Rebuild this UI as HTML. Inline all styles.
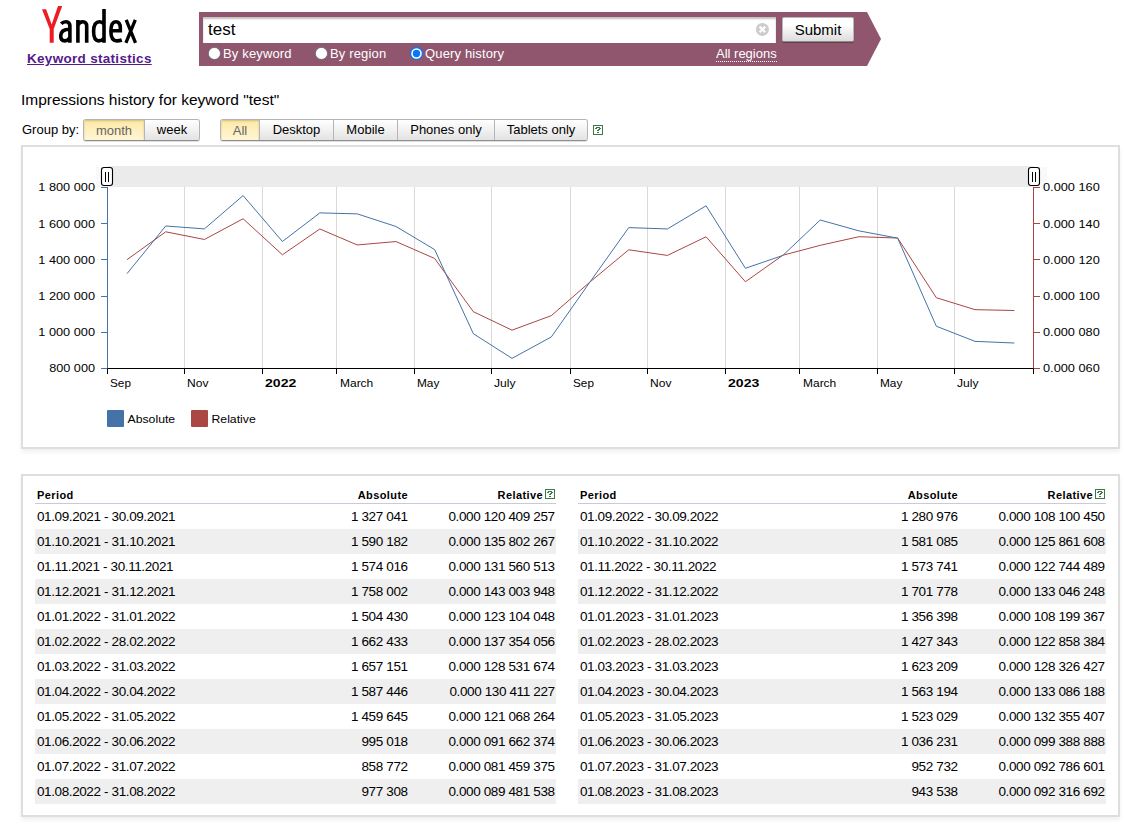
<!DOCTYPE html>
<html><head><meta charset="utf-8"><title>Keyword statistics</title>
<style>
*{margin:0;padding:0;box-sizing:border-box}
html,body{width:1142px;height:827px;overflow:hidden;background:#fff}
body{font-family:"Liberation Sans",sans-serif;font-size:13px;color:#000;position:relative}
.abs{position:absolute}
.ax{font-family:"Liberation Sans",sans-serif;font-size:11px;fill:#000}
.ax.b{font-weight:bold}
#kw{left:27px;top:51px;font-weight:bold;font-size:13.5px;letter-spacing:.3px;color:#551a8b;text-decoration:underline;white-space:nowrap}
#form{left:199px;top:12px;width:683px;height:54px}
#inp{left:203px;top:17px;width:573px;height:26px;background:#fff;box-shadow:inset 0 2px 2px rgba(0,0,0,.25)}
#inp span{position:absolute;left:5px;top:3px;font-size:17px}
#clr{left:756px;top:23px;width:13px;height:13px;border-radius:50%;background:#cfcfcf}
#sub{left:782px;top:17px;width:72px;height:25px;border:1px solid #b9b9b9;border-bottom-color:#8a8a8a;border-radius:2px;background:linear-gradient(#fff 30%,#dcdcdc);box-shadow:0 1px 1px rgba(0,0,0,.3);font-size:15px;text-align:center;line-height:23px}
.rad{position:absolute;top:47px;width:12px;height:12px;border-radius:50%;background:#fff;box-shadow:0 0 1px #777}
.rad.on{background:#1a73e8;border:2px solid #fff}
.rl{position:absolute;top:46px;color:#fff;font-size:13px;white-space:nowrap;letter-spacing:.15px}
#allr{position:absolute;top:46px;left:716px;color:#fff;font-size:13px;white-space:nowrap;border-bottom:1px dotted #fff;line-height:15px}
#title{left:21px;top:91px;font-size:15.5px;white-space:nowrap}
#gb{left:22px;top:122px;font-size:13px;white-space:nowrap}
.bg{position:absolute;top:119px;height:22px;display:flex;border:1px solid #b4b4b4;border-bottom-color:#8e8e8e;border-radius:3px;overflow:hidden;box-shadow:0 1px 0 rgba(0,0,0,.12)}
.bg div{height:20px;line-height:20px;font-size:13px;text-align:center;background:linear-gradient(#fff,#e3e3e3);border-left:1px solid #b5b5b5;white-space:nowrap}
.bg div:first-child{border-left:none}
.bg div.on{background:linear-gradient(#fde9a6,#fff6d6);color:#666;line-height:22px;box-shadow:inset 0 1px 2px rgba(110,90,20,.3)}
.help{display:inline-block;width:10px;height:10px;vertical-align:top}
th .help{margin-left:2px;position:relative;top:0px}
#panel1{left:21px;top:145px;width:1099px;height:304px;border:2px solid #dedede;box-shadow:0 3px 4px rgba(0,0,0,.06)}
#panel2{left:21px;top:474px;width:1099px;height:343px;border:2px solid #dedede;box-shadow:0 3px 4px rgba(0,0,0,.06)}
table{position:absolute;border-collapse:collapse;top:486px;table-layout:fixed}
th{font-size:11px;font-weight:bold;letter-spacing:.4px;height:17px;border-bottom:1px solid #cdc8d9;padding:3px 1px 0 2px;vertical-align:top;text-align:right;line-height:13px}
th.p{text-align:left}
td{height:25px;padding:0 2px;font-size:13.5px;letter-spacing:-.4px;word-spacing:.1px;white-space:nowrap}
td.n{text-align:right;padding-right:1.4px}
th:last-child{padding-right:1px}
tr.first td{height:26px}
tr.odd td{background:#efefef}
</style></head><body>
<div class="abs" id="panel1"></div>
<div class="abs" id="panel2"></div>
<div class="abs" id="kw">Keyword statistics</div>
<svg class="abs" style="left:0;top:0" width="1142" height="70"><polygon points="199,12 867,12 881,39 867,66 199,66" fill="#8f566e"/></svg>
<div class="abs" id="inp"><span>test</span></div>
<svg class="abs" style="left:755px;top:22px" width="15" height="15"><circle cx="7.4" cy="7.4" r="6.5" fill="#cccccc"/><path d="M4.6 4.6 L10.2 10.2 M10.2 4.6 L4.6 10.2" stroke="#fff" stroke-width="2.2"/></svg>
<div class="abs" id="sub">Submit</div>
<svg class="abs" style="left:0;top:0" width="440" height="70"><circle cx="214.4" cy="53.45" r="6.1" fill="#fff" stroke="#666" stroke-width="0.9"/><circle cx="321.45" cy="53.45" r="6.1" fill="#fff" stroke="#666" stroke-width="0.9"/><circle cx="416.5" cy="53.45" r="6.6" fill="#0a75f5"/><circle cx="416.5" cy="53.45" r="5.3" fill="#fff"/><circle cx="416.5" cy="53.45" r="3.7" fill="#0a75f5"/></svg><div class="rl" style="left:223px">By keyword</div>
<div class="rl" style="left:330px">By region</div>
<div class="rl" style="left:425px">Query history</div>
<div id="allr">All regions</div>
<div class="abs" id="title">Impressions history for keyword "test"</div>
<div class="abs" id="gb">Group by:</div>
<div class="bg" style="left:83px;width:117px"><div class="on" style="width:60px">month</div><div style="width:55px">week</div></div>
<div class="bg" style="left:220px;width:368px"><div class="on" style="width:38px">All</div><div style="width:74px">Desktop</div><div style="width:64px">Mobile</div><div style="width:97px">Phones only</div><div style="width:93px">Tablets only</div></div>
<div class="abs" style="left:593px;top:125px"><svg class="help" width="10" height="10" shape-rendering="crispEdges"><rect x="0.5" y="0.5" width="9" height="9" fill="none" stroke="#3b7a47"/><path d="M3 2h4v1H3z M2 3h2v1H2z M6 3h2v1H6z M5 4h2v1H5z M4 5h2v1H4z M4 7h2v1H4z" fill="#3b7a47"/></svg></div>
<svg width="1142" height="827" viewBox="0 0 1142 827" style="position:absolute;left:0;top:0">
<rect x="96" y="167" width="951" height="20" fill="#f9f9f9"/>
<rect x="107" y="166" width="927" height="21" fill="#ebebeb"/>
<line x1="184.5" y1="187" x2="184.5" y2="368" stroke="#d9d9d9" stroke-width="1"/>
<line x1="262.5" y1="187" x2="262.5" y2="368" stroke="#d9d9d9" stroke-width="1"/>
<line x1="336.5" y1="187" x2="336.5" y2="368" stroke="#d9d9d9" stroke-width="1"/>
<line x1="414.5" y1="187" x2="414.5" y2="368" stroke="#d9d9d9" stroke-width="1"/>
<line x1="491.5" y1="187" x2="491.5" y2="368" stroke="#d9d9d9" stroke-width="1"/>
<line x1="570.5" y1="187" x2="570.5" y2="368" stroke="#d9d9d9" stroke-width="1"/>
<line x1="647.5" y1="187" x2="647.5" y2="368" stroke="#d9d9d9" stroke-width="1"/>
<line x1="725.5" y1="187" x2="725.5" y2="368" stroke="#d9d9d9" stroke-width="1"/>
<line x1="799.5" y1="187" x2="799.5" y2="368" stroke="#d9d9d9" stroke-width="1"/>
<line x1="877.5" y1="187" x2="877.5" y2="368" stroke="#d9d9d9" stroke-width="1"/>
<line x1="954.5" y1="187" x2="954.5" y2="368" stroke="#d9d9d9" stroke-width="1"/>
<line x1="107" y1="368.5" x2="1034" y2="368.5" stroke="#000" stroke-width="1"/>
<line x1="107.5" y1="368" x2="107.5" y2="374" stroke="#000" stroke-width="1"/>
<line x1="184.5" y1="368" x2="184.5" y2="374" stroke="#000" stroke-width="1"/>
<line x1="262.5" y1="368" x2="262.5" y2="374" stroke="#000" stroke-width="1"/>
<line x1="336.5" y1="368" x2="336.5" y2="374" stroke="#000" stroke-width="1"/>
<line x1="414.5" y1="368" x2="414.5" y2="374" stroke="#000" stroke-width="1"/>
<line x1="491.5" y1="368" x2="491.5" y2="374" stroke="#000" stroke-width="1"/>
<line x1="570.5" y1="368" x2="570.5" y2="374" stroke="#000" stroke-width="1"/>
<line x1="647.5" y1="368" x2="647.5" y2="374" stroke="#000" stroke-width="1"/>
<line x1="725.5" y1="368" x2="725.5" y2="374" stroke="#000" stroke-width="1"/>
<line x1="799.5" y1="368" x2="799.5" y2="374" stroke="#000" stroke-width="1"/>
<line x1="877.5" y1="368" x2="877.5" y2="374" stroke="#000" stroke-width="1"/>
<line x1="954.5" y1="368" x2="954.5" y2="374" stroke="#000" stroke-width="1"/>
<line x1="1033.5" y1="368" x2="1033.5" y2="374" stroke="#000" stroke-width="1"/>
<line x1="107.5" y1="187" x2="107.5" y2="368.5" stroke="#4572a7" stroke-width="1"/>
<line x1="1033.5" y1="187" x2="1033.5" y2="368.5" stroke="#aa4643" stroke-width="1"/>
<line x1="101" y1="187.5" x2="107" y2="187.5" stroke="#4572a7" stroke-width="1"/>
<line x1="1034" y1="187.5" x2="1040" y2="187.5" stroke="#aa4643" stroke-width="1"/>
<text x="95.0" y="191.3" text-anchor="end" class="ax" textLength="56.69" lengthAdjust="spacingAndGlyphs">1 800 000</text>
<text x="1043.0" y="191.3" text-anchor="start" class="ax" textLength="56.82" lengthAdjust="spacingAndGlyphs">0.000 160</text>
<line x1="101" y1="223.5" x2="107" y2="223.5" stroke="#4572a7" stroke-width="1"/>
<line x1="1034" y1="223.5" x2="1040" y2="223.5" stroke="#aa4643" stroke-width="1"/>
<text x="95.0" y="227.5" text-anchor="end" class="ax" textLength="56.69" lengthAdjust="spacingAndGlyphs">1 600 000</text>
<text x="1043.0" y="227.5" text-anchor="start" class="ax" textLength="56.82" lengthAdjust="spacingAndGlyphs">0.000 140</text>
<line x1="101" y1="259.5" x2="107" y2="259.5" stroke="#4572a7" stroke-width="1"/>
<line x1="1034" y1="259.5" x2="1040" y2="259.5" stroke="#aa4643" stroke-width="1"/>
<text x="95.0" y="263.7" text-anchor="end" class="ax" textLength="56.69" lengthAdjust="spacingAndGlyphs">1 400 000</text>
<text x="1043.0" y="263.7" text-anchor="start" class="ax" textLength="56.82" lengthAdjust="spacingAndGlyphs">0.000 120</text>
<line x1="101" y1="296.5" x2="107" y2="296.5" stroke="#4572a7" stroke-width="1"/>
<line x1="1034" y1="296.5" x2="1040" y2="296.5" stroke="#aa4643" stroke-width="1"/>
<text x="95.0" y="299.9" text-anchor="end" class="ax" textLength="56.69" lengthAdjust="spacingAndGlyphs">1 200 000</text>
<text x="1043.0" y="299.9" text-anchor="start" class="ax" textLength="56.82" lengthAdjust="spacingAndGlyphs">0.000 100</text>
<line x1="101" y1="332.5" x2="107" y2="332.5" stroke="#4572a7" stroke-width="1"/>
<line x1="1034" y1="332.5" x2="1040" y2="332.5" stroke="#aa4643" stroke-width="1"/>
<text x="95.0" y="336.1" text-anchor="end" class="ax" textLength="56.69" lengthAdjust="spacingAndGlyphs">1 000 000</text>
<text x="1043.0" y="336.1" text-anchor="start" class="ax" textLength="56.82" lengthAdjust="spacingAndGlyphs">0.000 080</text>
<line x1="101" y1="368.5" x2="107" y2="368.5" stroke="#4572a7" stroke-width="1"/>
<line x1="1034" y1="368.5" x2="1040" y2="368.5" stroke="#aa4643" stroke-width="1"/>
<text x="95.0" y="372.3" text-anchor="end" class="ax" textLength="45.83" lengthAdjust="spacingAndGlyphs">800 000</text>
<text x="1043.0" y="372.3" text-anchor="start" class="ax" textLength="56.82" lengthAdjust="spacingAndGlyphs">0.000 060</text>
<text x="110.0" y="387.0" text-anchor="start" class="ax" textLength="20.92" lengthAdjust="spacingAndGlyphs">Sep</text>
<text x="187.0" y="387.0" text-anchor="start" class="ax" textLength="21.41" lengthAdjust="spacingAndGlyphs">Nov</text>
<text x="265.0" y="387.0" text-anchor="start" class="ax b" textLength="31.28" lengthAdjust="spacingAndGlyphs">2022</text>
<text x="340.0" y="387.0" text-anchor="start" class="ax" textLength="33.26" lengthAdjust="spacingAndGlyphs">March</text>
<text x="417.0" y="387.0" text-anchor="start" class="ax" textLength="22.39" lengthAdjust="spacingAndGlyphs">May</text>
<text x="494.0" y="387.0" text-anchor="start" class="ax" textLength="21.48" lengthAdjust="spacingAndGlyphs">July</text>
<text x="573.0" y="387.0" text-anchor="start" class="ax" textLength="20.92" lengthAdjust="spacingAndGlyphs">Sep</text>
<text x="650.0" y="387.0" text-anchor="start" class="ax" textLength="21.41" lengthAdjust="spacingAndGlyphs">Nov</text>
<text x="728.0" y="387.0" text-anchor="start" class="ax b" textLength="31.28" lengthAdjust="spacingAndGlyphs">2023</text>
<text x="803.0" y="387.0" text-anchor="start" class="ax" textLength="33.26" lengthAdjust="spacingAndGlyphs">March</text>
<text x="880.0" y="387.0" text-anchor="start" class="ax" textLength="22.39" lengthAdjust="spacingAndGlyphs">May</text>
<text x="957.0" y="387.0" text-anchor="start" class="ax" textLength="21.48" lengthAdjust="spacingAndGlyphs">July</text>
<path d="M127.03 259.66 L165.72 231.80 L204.41 239.48 L243.09 218.76 L282.42 254.78 L319.84 228.99 L357.26 244.96 L395.95 241.56 L434.64 258.47 L473.33 311.69 L512.02 330.16 L551.34 315.64 L590.03 281.94 L628.72 249.79 L667.41 255.43 L706.09 236.79 L745.42 281.76 L782.84 255.23 L820.26 245.33 L858.95 236.71 L897.64 238.04 L936.33 297.71 L975.02 309.66 L1014.34 310.51" fill="none" stroke="#aa4643" stroke-width="1" stroke-linejoin="round"/>
<path d="M127.03 273.61 L165.72 225.98 L204.41 228.90 L243.09 195.60 L282.42 241.50 L319.84 212.90 L357.26 213.86 L395.95 226.47 L434.64 249.60 L473.33 333.70 L512.02 358.36 L551.34 336.91 L590.03 281.94 L628.72 227.62 L667.41 228.95 L706.09 205.78 L745.42 268.29 L782.84 255.45 L820.26 220.00 L858.95 230.86 L897.64 238.13 L936.33 326.24 L975.02 341.36 L1014.34 343.02" fill="none" stroke="#4572a7" stroke-width="1" stroke-linejoin="round"/>
<rect x="101.5" y="167.5" width="11" height="18" rx="2.5" ry="2.5" fill="#fff" stroke="#000" stroke-width="1.1"/>
<line x1="105.5" y1="172" x2="105.5" y2="182" stroke="#000" stroke-width="1"/>
<line x1="108.5" y1="172" x2="108.5" y2="182" stroke="#000" stroke-width="1"/>
<rect x="1028.5" y="167.5" width="11" height="18" rx="2.5" ry="2.5" fill="#fff" stroke="#000" stroke-width="1.1"/>
<line x1="1032.5" y1="172" x2="1032.5" y2="182" stroke="#000" stroke-width="1"/>
<line x1="1035.5" y1="172" x2="1035.5" y2="182" stroke="#000" stroke-width="1"/>
<rect x="107" y="410" width="17" height="17" rx="1" fill="#4572a7"/>
<text x="127.5" y="423.3" text-anchor="start" class="ax" textLength="47.65" lengthAdjust="spacingAndGlyphs">Absolute</text>
<rect x="191" y="410" width="17" height="17" rx="1" fill="#aa4643"/>
<text x="211.5" y="423.3" text-anchor="start" class="ax" textLength="44.23" lengthAdjust="spacingAndGlyphs">Relative</text>
<path d="M42 9.2 L46.1 9.2 L51.7 24.6 L58 6 L62.2 6 L53.7 29 L53.7 42.7 L49.7 42.7 L49.7 29 Z" fill="#ec1c24"/>
<path d="M61.2 23.8 C62.8 22.2, 64.6 21.8, 66 21.8 C68.6 21.8, 69.9 23.4, 69.9 26.5 L69.9 42.7 M69.9 29.2 C63.6 29.2, 60.7 31.5, 60.7 35.8 C60.7 39.3, 62.3 40.9, 64.8 40.9 C67.4 40.9, 69.2 39.3, 69.9 37 M77.9 20 L77.9 42.7 M77.9 25.5 C78.8 23, 80.6 21.8, 82.8 21.8 C85.4 21.8, 86.7 23.3, 86.7 26.5 L86.7 42.7 M104 9.1 L104 42.7 M104 24 C102.7 22.4, 101.2 21.8, 99.6 21.8 C95.6 21.8, 93.6 25.3, 93.6 31.6 C93.6 37.8, 95.4 40.9, 98.8 40.9 C100.8 40.9, 102.6 39.8, 104 38 M109.5 30.8 L120.3 30.8 L120.3 28 C120.3 23.6, 118.6 21.7, 115.8 21.7 C112.6 21.7, 110.9 25, 110.9 31.2 C110.9 37.6, 112.8 40.9, 117 40.9 C118.6 40.9, 120.2 40.6, 121.8 40" fill="none" stroke="#000" stroke-width="3.6"/>
<path d="M126.2 19.8 L135.5 42.8 M135.3 19.8 L125.9 42.8" fill="none" stroke="#000" stroke-width="3.3"/>
</svg>
<table style="left:35px;width:521px"><col style="width:225px"><col style="width:149px"><col style="width:147px">
<tr><th class="p">Period</th><th>Absolute</th><th>Relative<svg class="help" width="10" height="10" shape-rendering="crispEdges"><rect x="0.5" y="0.5" width="9" height="9" fill="none" stroke="#3b7a47"/><path d="M3 2h4v1H3z M2 3h2v1H2z M6 3h2v1H6z M5 4h2v1H5z M4 5h2v1H4z M4 7h2v1H4z" fill="#3b7a47"/></svg></th></tr>
<tr class="first"><td class="p">01.09.2021 - 30.09.2021</td><td class="n">1 327 041</td><td class="n">0.000 120 409 257</td></tr>
<tr class="odd"><td class="p">01.10.2021 - 31.10.2021</td><td class="n">1 590 182</td><td class="n">0.000 135 802 267</td></tr>
<tr><td class="p">01.11.2021 - 30.11.2021</td><td class="n">1 574 016</td><td class="n">0.000 131 560 513</td></tr>
<tr class="odd"><td class="p">01.12.2021 - 31.12.2021</td><td class="n">1 758 002</td><td class="n">0.000 143 003 948</td></tr>
<tr><td class="p">01.01.2022 - 31.01.2022</td><td class="n">1 504 430</td><td class="n">0.000 123 104 048</td></tr>
<tr class="odd"><td class="p">01.02.2022 - 28.02.2022</td><td class="n">1 662 433</td><td class="n">0.000 137 354 056</td></tr>
<tr><td class="p">01.03.2022 - 31.03.2022</td><td class="n">1 657 151</td><td class="n">0.000 128 531 674</td></tr>
<tr class="odd"><td class="p">01.04.2022 - 30.04.2022</td><td class="n">1 587 446</td><td class="n">0.000 130 411 227</td></tr>
<tr><td class="p">01.05.2022 - 31.05.2022</td><td class="n">1 459 645</td><td class="n">0.000 121 068 264</td></tr>
<tr class="odd"><td class="p">01.06.2022 - 30.06.2022</td><td class="n">995 018</td><td class="n">0.000 091 662 374</td></tr>
<tr><td class="p">01.07.2022 - 31.07.2022</td><td class="n">858 772</td><td class="n">0.000 081 459 375</td></tr>
<tr class="odd"><td class="p">01.08.2022 - 31.08.2022</td><td class="n">977 308</td><td class="n">0.000 089 481 538</td></tr>
</table>
<table style="left:578px;width:528px"><col style="width:232px"><col style="width:149px"><col style="width:147px">
<tr><th class="p">Period</th><th>Absolute</th><th>Relative<svg class="help" width="10" height="10" shape-rendering="crispEdges"><rect x="0.5" y="0.5" width="9" height="9" fill="none" stroke="#3b7a47"/><path d="M3 2h4v1H3z M2 3h2v1H2z M6 3h2v1H6z M5 4h2v1H5z M4 5h2v1H4z M4 7h2v1H4z" fill="#3b7a47"/></svg></th></tr>
<tr class="first"><td class="p">01.09.2022 - 30.09.2022</td><td class="n">1 280 976</td><td class="n">0.000 108 100 450</td></tr>
<tr class="odd"><td class="p">01.10.2022 - 31.10.2022</td><td class="n">1 581 085</td><td class="n">0.000 125 861 608</td></tr>
<tr><td class="p">01.11.2022 - 30.11.2022</td><td class="n">1 573 741</td><td class="n">0.000 122 744 489</td></tr>
<tr class="odd"><td class="p">01.12.2022 - 31.12.2022</td><td class="n">1 701 778</td><td class="n">0.000 133 046 248</td></tr>
<tr><td class="p">01.01.2023 - 31.01.2023</td><td class="n">1 356 398</td><td class="n">0.000 108 199 367</td></tr>
<tr class="odd"><td class="p">01.02.2023 - 28.02.2023</td><td class="n">1 427 343</td><td class="n">0.000 122 858 384</td></tr>
<tr><td class="p">01.03.2023 - 31.03.2023</td><td class="n">1 623 209</td><td class="n">0.000 128 326 427</td></tr>
<tr class="odd"><td class="p">01.04.2023 - 30.04.2023</td><td class="n">1 563 194</td><td class="n">0.000 133 086 188</td></tr>
<tr><td class="p">01.05.2023 - 31.05.2023</td><td class="n">1 523 029</td><td class="n">0.000 132 355 407</td></tr>
<tr class="odd"><td class="p">01.06.2023 - 30.06.2023</td><td class="n">1 036 231</td><td class="n">0.000 099 388 888</td></tr>
<tr><td class="p">01.07.2023 - 31.07.2023</td><td class="n">952 732</td><td class="n">0.000 092 786 601</td></tr>
<tr class="odd"><td class="p">01.08.2023 - 31.08.2023</td><td class="n">943 538</td><td class="n">0.000 092 316 692</td></tr>
</table>
</body></html>
